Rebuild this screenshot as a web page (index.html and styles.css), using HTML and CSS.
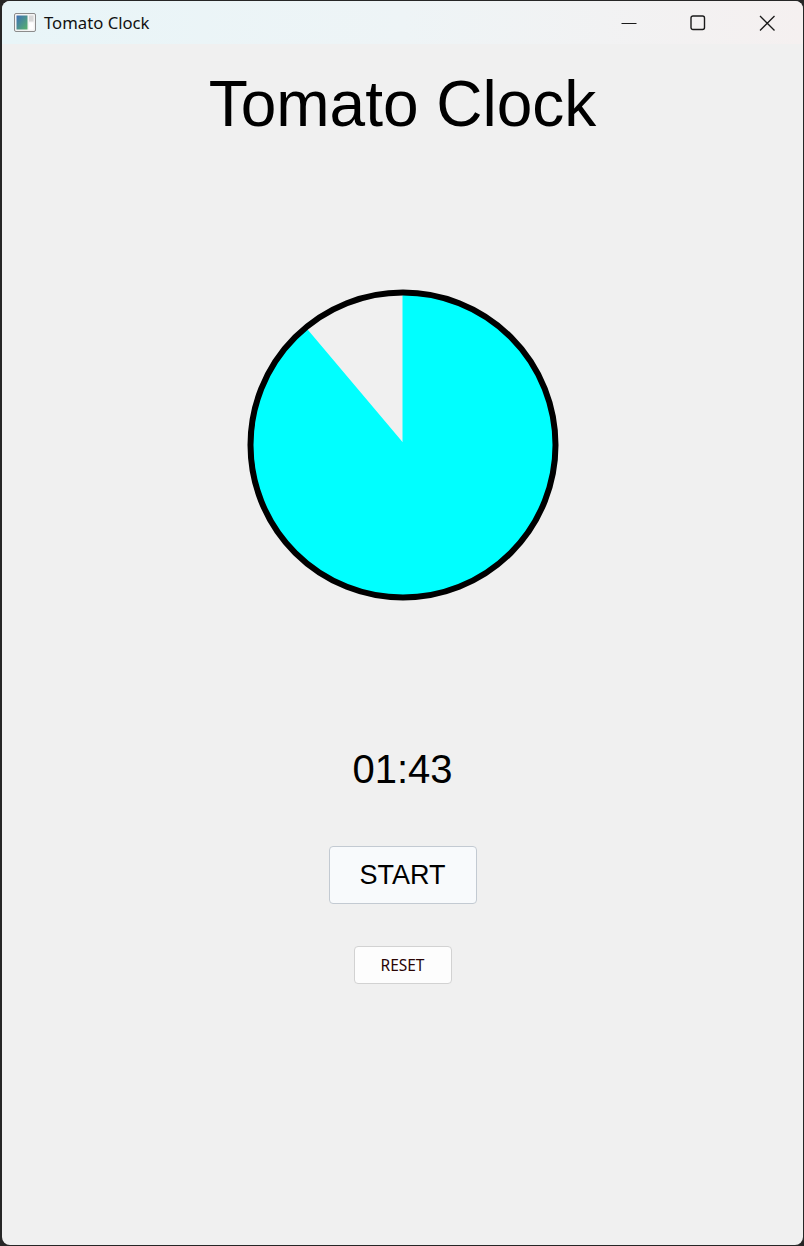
FILE: index.html
```html
<!DOCTYPE html>
<html>
<head>
<meta charset="utf-8">
<title>Tomato Clock</title>
<link rel="stylesheet" href="styles.css">
</head>
<body>
<div class="window">
  <div class="titlebar">
    <div class="app-icon">
      <svg width="22" height="19" viewBox="0 0 22 19">
        <defs>
          <linearGradient id="ig" x1="0" y1="0" x2="1" y2="1">
            <stop offset="0" stop-color="#3d6fb8"/>
            <stop offset="1" stop-color="#58b36a"/>
          </linearGradient>
        </defs>
        <rect x="0.5" y="0.5" width="21" height="18" rx="1.5" fill="#f4f4f4" stroke="#8c8c8c"/>
        <rect x="2.5" y="2.5" width="11" height="14" fill="url(#ig)"/>
        <rect x="15" y="2.5" width="4.5" height="6" fill="#d8d8d8"/>
        <rect x="15" y="9.5" width="4.5" height="7" fill="#ffffff"/>
      </svg>
    </div>
    <div class="win-title">Tomato Clock</div>
    <div class="controls">
      <div class="ctl">
        <svg width="16" height="16" viewBox="0 0 16 16"><line x1="0.5" y1="8.5" x2="15.5" y2="8.5" stroke="#1a1a1a" stroke-width="1.2"/></svg>
      </div>
      <div class="ctl">
        <svg width="16" height="16" viewBox="0 0 16 16"><rect x="1" y="1" width="13.5" height="13.5" rx="2" fill="none" stroke="#1a1a1a" stroke-width="1.4"/></svg>
      </div>
      <div class="ctl">
        <svg width="16" height="16" viewBox="0 0 16 16"><path d="M1 1 L15.5 15.5 M15.5 1 L1 15.5" stroke="#1a1a1a" stroke-width="1.3" fill="none"/></svg>
      </div>
    </div>
  </div>
  <div class="content">
    <h1 class="heading">Tomato Clock</h1>
    <svg class="pie" width="320" height="320" viewBox="0 0 320 320">
      <path d="M159.5 157 L159.5 7 A153 153 0 1 1 62.5 42.1 Z" fill="#00ffff"/>
      <circle cx="160" cy="160" r="152.5" fill="none" stroke="#000" stroke-width="6"/>
    </svg>
    <div class="time">01:43</div>
    <button class="btn btn-start">START</button>
    <button class="btn btn-reset">RESET</button>
  </div>
</div>
</body>
</html>
```
FILE: styles.css
```css
html, body {
  margin: 0;
  padding: 0;
}
body {
  background: #262626;
  width: 804px;
  height: 1246px;
  overflow: hidden;
}
.window {
  margin: 1px 1px 1px 2px;
  height: 1244px;
  border-radius: 8px;
  overflow: hidden;
  background: #f0f0f0;
  display: flex;
  flex-direction: column;
}
.titlebar {
  height: 43px;
  flex: none;
  display: flex;
  align-items: center;
  background: linear-gradient(to right, #e8f5f8 0%, #eef4f6 50%, #f5f0f0 100%);
}
.app-icon {
  margin-left: 12px;
  margin-top: -1px;
  width: 22px;
  height: 19px;
  display: flex;
}
.win-title {
  margin-left: 8px;
  font-family: "Noto Sans", "Open Sans", sans-serif;
  font-size: 16.7px;
  color: #111;
  margin-top: -1px;
}
.controls {
  margin-left: auto;
  display: flex;
  height: 100%;
  padding-right: 2px;
}
.ctl {
  width: 69px;
  display: flex;
  align-items: center;
  justify-content: center;
}
.content {
  flex: 1;
  display: flex;
  flex-direction: column;
  align-items: center;
  padding-top: 25px;
}
.heading {
  margin: 0;
  font-family: "Liberation Sans", Arial, sans-serif;
  font-weight: normal;
  font-size: 64px;
  line-height: 70px;
  color: #000;
}
.pie {
  display: block;
  margin-top: 146px;
}
.time {
  margin-top: 141px;
  font-family: "Liberation Sans", Arial, sans-serif;
  font-size: 40px;
  line-height: 46px;
  color: #000;
}
.btn {
  display: flex;
  align-items: center;
  justify-content: center;
  padding: 0;
  border-radius: 4px;
  cursor: pointer;
}
.btn-start {
  margin-top: 54px;
  width: 148px;
  height: 58px;
  background: #f8fafc;
  border: 1px solid #c3cad2;
  font-family: "Liberation Sans", Arial, sans-serif;
  font-size: 27px;
  color: #000;
}
.btn-reset {
  margin-top: 42px;
  width: 98px;
  height: 38px;
  background: #fdfdfd;
  border: 1px solid #d2d2d2;
  font-family: "Noto Sans", "Open Sans", sans-serif;
  font-size: 15.5px;
  color: #2a0505;
}
```
